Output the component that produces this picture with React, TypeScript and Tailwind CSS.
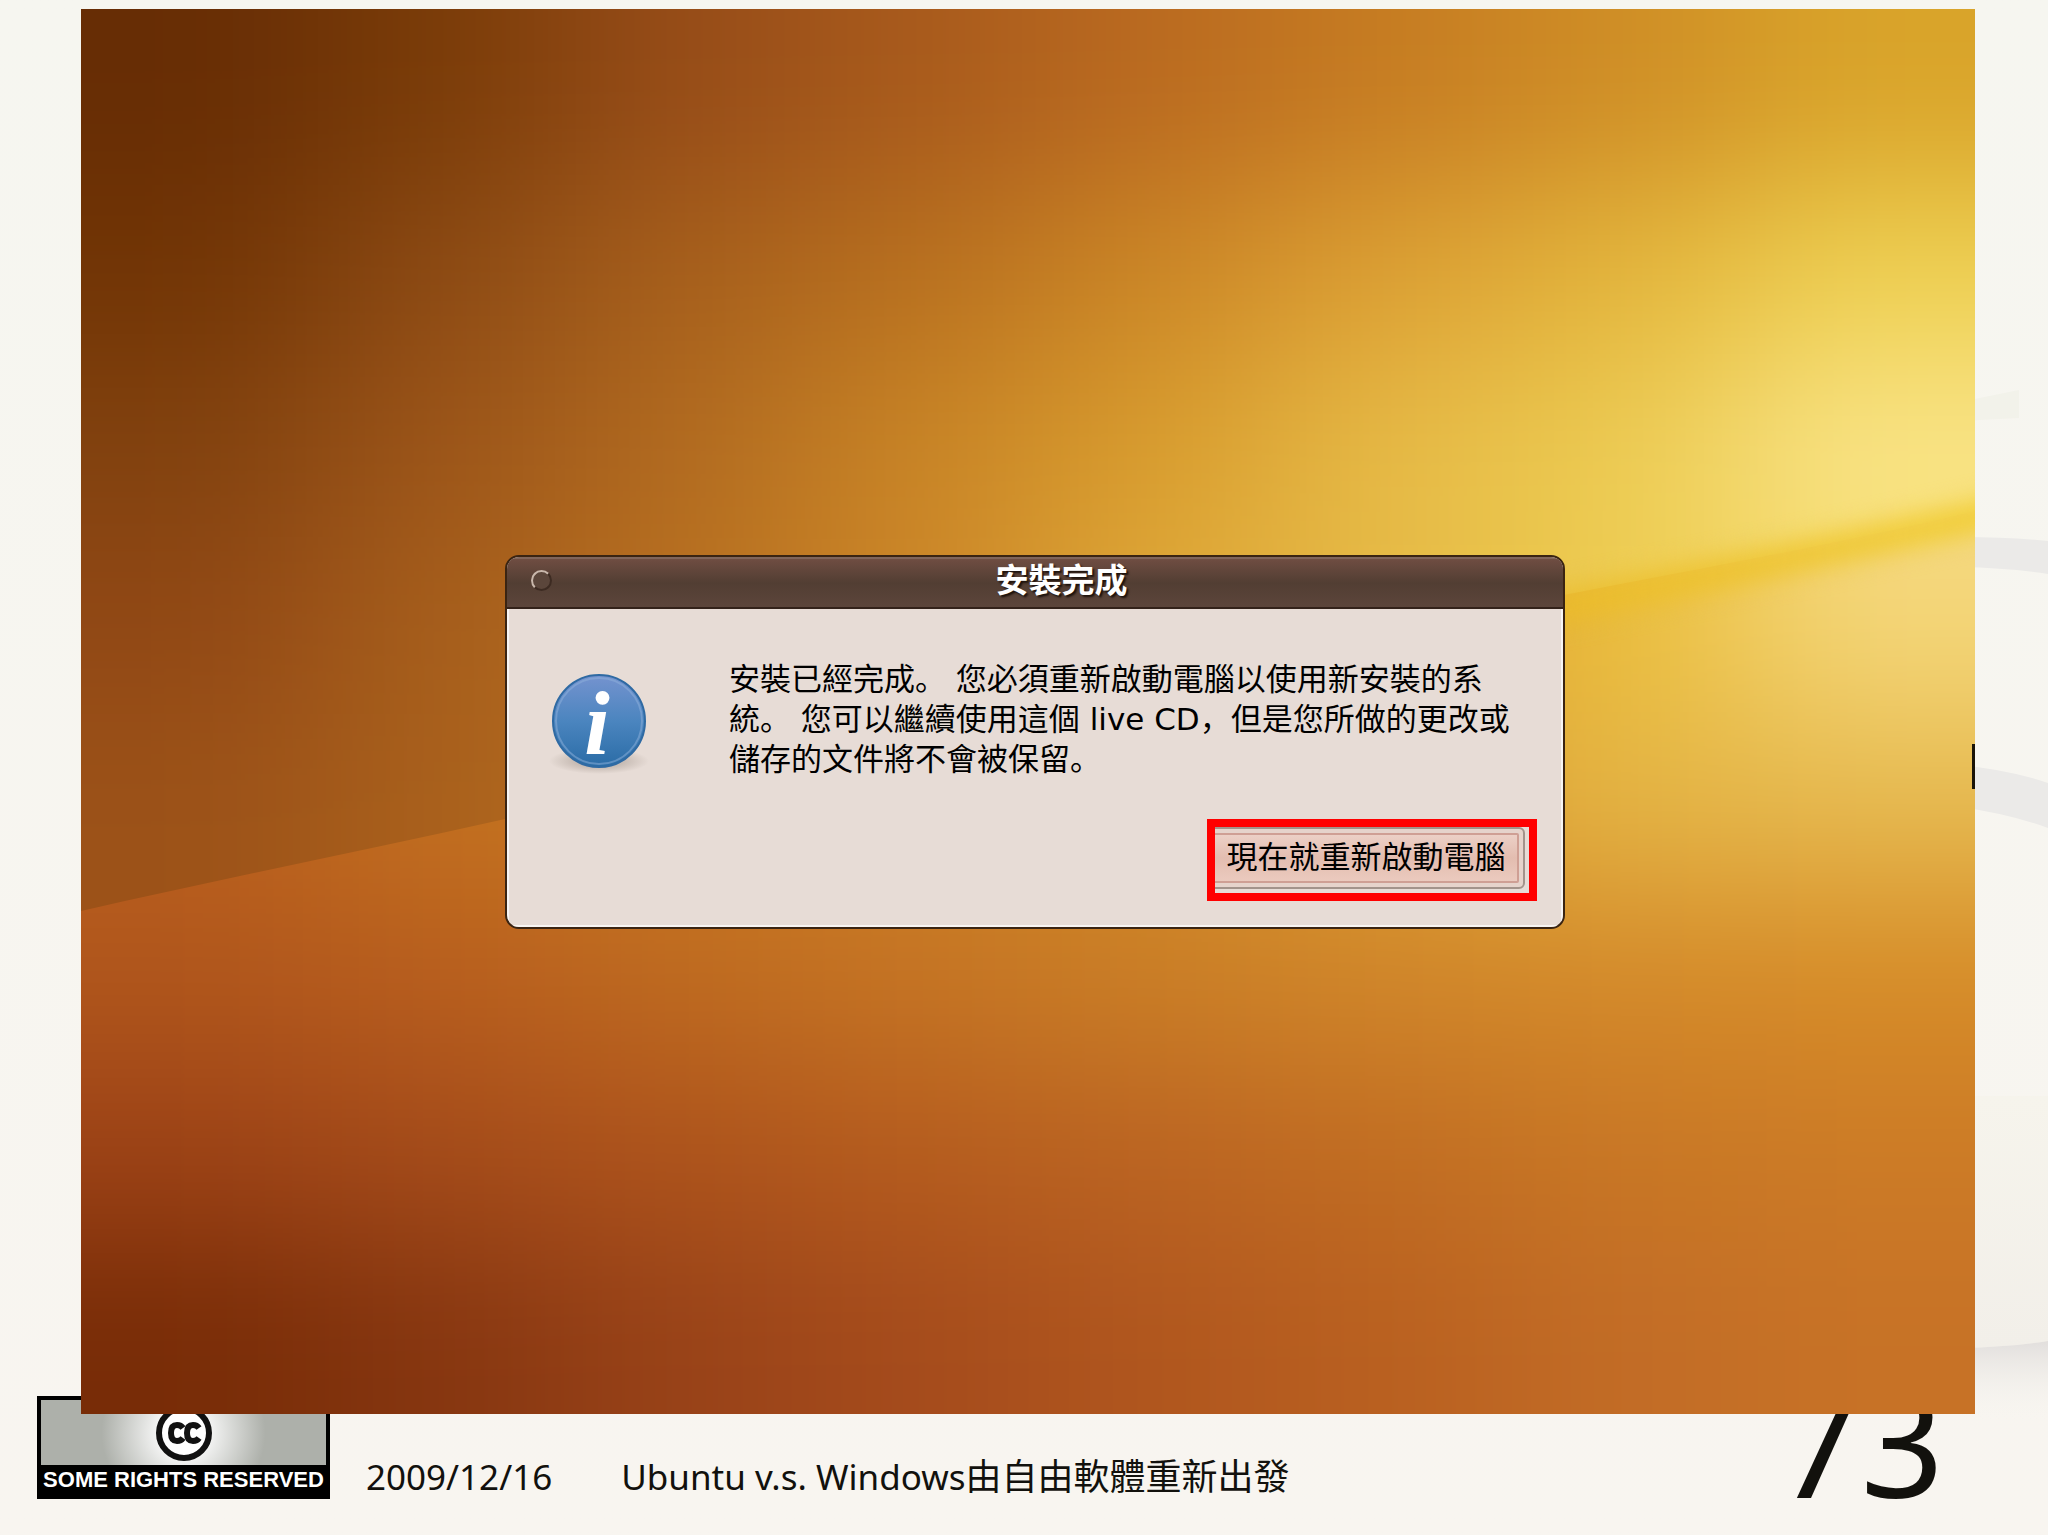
import { useState } from "react";

// colour samples of the wallpaper, 8 columns x 8 rows
const SKY = [
  ["#672d05", "#7a3c08", "#964c18", "#a85a1c", "#ba6a20", "#c67c22", "#cf8e26", "#d9a42a"],
  ["#723505", "#8c4a14", "#a65f1c", "#b8701f", "#cb8626", "#dca034", "#e3b53c", "#eed052"],
  ["#82420f", "#9c5519", "#b16a20", "#c88426", "#d89c2e", "#e6ba46", "#eccb52", "#f9e488"],
  ["#914815", "#a65e1c", "#b87020", "#cc8628", "#dfa838", "#e6ba46", "#eecd50", "#f6dd70"],
  ["#9c5218", "#a9601c", "#b87020", "#cc8628", "#dfa838", "#e6ba46", "#eecb4a", "#f4d660"],
  ["#9c5218", "#a9601c", "#b87020", "#cc8628", "#dfa838", "#e6ba46", "#eecb4a", "#f4d660"],
];

const GROUND = [
  ["#ba601e", "#c06c20", "#c87a20", "#cc8024", "#d18a28", "#e0a030", "#eabe38", "#f5da84"],
  ["#ba601e", "#c06c20", "#c87a20", "#cc8024", "#d18a28", "#e0a030", "#eabe38", "#f5da84"],
  ["#ba601e", "#c06c20", "#c87a20", "#cc8024", "#d18a28", "#e0a030", "#eabe38", "#f5da84"],
  ["#ba601e", "#c06c20", "#c87a20", "#cc8024", "#d18a28", "#e0a030", "#eabe3c", "#f4d678"],
  ["#ba601e", "#c2701f", "#c8781f", "#cc8024", "#d18a28", "#dc9e32", "#e4b444", "#e6ba50"],
  ["#b0561c", "#b85e1e", "#be6a20", "#c57424", "#ca7e26", "#d0862a", "#d48a2a", "#d68c28"],
  ["#9c4216", "#a44b1a", "#ad531c", "#b55c1e", "#bb6422", "#c16d22", "#c87725", "#cc7b26"],
  ["#782c07", "#863610", "#984218", "#a54b1c", "#b0561e", "#b96020", "#c26c26", "#c77226"],
];

const COLS = [-1, 0, 1, 2, 3, 4, 5, 6, 7, 8];
const CELL_W = 237;
const CELL_H = 176;

function ColourField({ rows }: { rows: string[][] }) {
  return (
    <g filter="url(#soften)">
      {[-1, ...rows.map((_, i) => i), rows.length].map((row) =>
        COLS.map((col) => (
          <rect
            key={`${row}-${col}`}
            x={col * CELL_W}
            y={row * CELL_H}
            width={CELL_W + 1}
            height={CELL_H + 1}
            fill={
              rows[Math.min(Math.max(row, 0), rows.length - 1)][
                Math.min(Math.max(col, 0), 7)
              ]
            }
          />
        ))
      )}
    </g>
  );
}

function Wallpaper() {
  return (
    <svg
      className="absolute inset-0 h-full w-full"
      viewBox="0 0 1894 1405"
      preserveAspectRatio="none"
      aria-hidden="true"
    >
      <defs>
        <filter
          id="soften"
          filterUnits="userSpaceOnUse"
          x="-240"
          y="-180"
          width="2380"
          height="1770"
          colorInterpolationFilters="sRGB"
        >
          <feGaussianBlur stdDeviation="90 70" />
        </filter>
        <filter
          id="glow"
          filterUnits="userSpaceOnUse"
          x="1000"
          y="300"
          width="1000"
          height="500"
          colorInterpolationFilters="sRGB"
        >
          <feGaussianBlur stdDeviation="12" />
        </filter>
        <linearGradient id="ridge" x1="0" x2="1" y1="0" y2="0">
          <stop offset="0" stopColor="#e6ac28" stopOpacity="0" />
          <stop offset="0.4" stopColor="#ebbc2a" stopOpacity="0.9" />
          <stop offset="1" stopColor="#f2d038" />
        </linearGradient>
        <clipPath id="ground">
          <path d="M0 902 C140 870 280 842 424 810 C800 724 1120 660 1483 586 C1640 556 1780 530 1894 502 V1405 H0 Z" />
        </clipPath>
      </defs>
      <ColourField rows={SKY} />
      <g clipPath="url(#ground)">
        <ColourField rows={GROUND} />
      </g>
      <path
        d="M1200 656 L1483 598 C1640 564 1780 536 1940 498"
        fill="none"
        stroke="url(#ridge)"
        strokeWidth="30"
        filter="url(#glow)"
      />
    </svg>
  );
}

function SlideBackdrop() {
  return (
    <svg
      className="absolute inset-0 h-full w-full"
      viewBox="0 0 2048 1535"
      preserveAspectRatio="none"
      aria-hidden="true"
    >
      <defs>
        <linearGradient id="fold" x1="0" x2="0" y1="0" y2="1">
          <stop offset="0" stopColor="#e2dfdd" />
          <stop offset="1" stopColor="#f6f4ef" stopOpacity="0" />
        </linearGradient>
        <linearGradient id="sheet" x1="0" x2="0" y1="0" y2="1">
          <stop offset="0" stopColor="#f6f4ec" />
          <stop offset="1" stopColor="#f2efe9" />
        </linearGradient>
      </defs>
      <path d="M1960 402 L2019 390 V418 L1960 421 Z" fill="#f2f2ea" />
      <path d="M1960 537 Q2010 537 2048 541 V574 Q2010 568 1960 567 Z" fill="#ebeae8" />
      <path d="M1960 765 Q2010 770 2048 783 V828 Q2010 814 1960 807 Z" fill="#ebeae8" />
      <path d="M1960 1096 H2048 V1341 Q2010 1347 1960 1348 Z" fill="url(#sheet)" />
      <path d="M1960 1348 Q2010 1347 2048 1341 V1420 H1960 Z" fill="url(#fold)" />
    </svg>
  );
}

function InfoIcon() {
  return (
    <svg className="mt-3 h-[108px] w-[108px] shrink-0" viewBox="0 0 108 108" role="img" aria-label="info">
      <defs>
        <linearGradient id="disc" x1="0" x2="0" y1="0" y2="1">
          <stop offset="0" stopColor="#7593cf" />
          <stop offset="0.5" stopColor="#4b85bf" />
          <stop offset="1" stopColor="#2a6ca6" />
        </linearGradient>
        <radialGradient id="disc-shadow">
          <stop offset="0.5" stopColor="#a99d94" stopOpacity="0.5" />
          <stop offset="1" stopColor="#a99d94" stopOpacity="0" />
        </radialGradient>
      </defs>
      <ellipse cx="54" cy="90" rx="50" ry="13" fill="url(#disc-shadow)" />
      <circle cx="54" cy="50" r="46" fill="url(#disc)" stroke="#2f6aa3" strokeWidth="2" />
      <circle cx="54" cy="50" r="43" fill="none" stroke="#8fb2dc" strokeOpacity="0.5" strokeWidth="2" />
      <text
        x="52"
        y="83"
        textAnchor="middle"
        className="fill-white font-['Liberation_Serif',serif] text-[92px] font-bold italic"
      >
        i
      </text>
    </svg>
  );
}

function LicenseBadge() {
  return (
    <a
      href="#license"
      className="flex h-[103px] w-[293px] shrink-0 flex-col border-4 border-black bg-black"
    >
      <span className="flex flex-1 items-center justify-center bg-[radial-gradient(circle_at_center,#ffffff_12%,#adb0aa_56%)]">
        <svg className="h-[60px] w-[60px]" viewBox="0 0 60 60" aria-hidden="true">
          <circle cx="30" cy="30" r="25" fill="#fff" stroke="#111" strokeWidth="6" />
          <g fill="none" stroke="#111" strokeWidth="6">
            <path d="M29 25 Q27 22 23 22 Q17 22 17 30 Q17 38 23 38 Q27 38 29 35" />
            <path d="M45 25 Q43 22 39 22 Q33 22 33 30 Q33 38 39 38 Q43 38 45 35" />
          </g>
        </svg>
      </span>
      <span className="h-[30px] text-center font-['Liberation_Sans',sans-serif] text-[22px] leading-[30px] font-bold whitespace-nowrap text-white">
        SOME RIGHTS RESERVED
      </span>
    </a>
  );
}

function InstallDialog({ onRestart }: { onRestart: () => void }) {
  return (
    <div
      role="dialog"
      aria-labelledby="dialog-title"
      className="w-[1060px] max-w-full overflow-hidden rounded-[14px] border-2 border-[#3a2412] bg-[#e7dcd6] font-['DejaVu_Sans','Noto_Sans_CJK_SC',sans-serif] text-black"
    >
      {/* Title bar */}
      <div className="flex h-[52px] items-center border-t-2 border-b-2 border-t-[#80655a] border-b-[#33221a] bg-linear-to-b from-[#6f4d42] via-[#523e33] to-[#5c453b] pb-1 pl-6">
        <button
          type="button"
          aria-label="關閉"
          className="h-[21px] w-[21px] rounded-full border-2 border-[#3d2b22] border-t-[#c9b8ac] border-l-[#c9b8ac] bg-[#5b463b]"
        />
        <h1
          id="dialog-title"
          className="flex-1 pl-2 text-center text-[33px] leading-[44px] font-bold text-white [text-shadow:2px_2px_2px_#1d120c]"
        >
          安裝完成
        </h1>
      </div>

      {/* Message */}
      <div className="border-x-2 border-b-2 border-white/70 pt-[50px] pr-9 pb-9 pl-9">
        <div className="flex items-start gap-[76px]">
          <InfoIcon />
          <p className="text-[31px] leading-[40px] whitespace-nowrap">
            安裝已經完成。 您必須重新啟動電腦以使用新安裝的系
            <br />
            統。 您可以繼續使用這個 live CD，但是您所做的更改或
            <br />
            儲存的文件將不會被保留。
          </p>
        </div>
        <div className="mt-12 flex justify-end">
          <div className="relative">
            <button
              type="button"
              onClick={onRestart}
              className="block rounded-md border-2 border-[#a3938b] bg-[#e6d3cb] p-1"
            >
              <span className="flex h-[50px] w-[306px] items-center justify-center rounded-xs border-2 border-[#cf9f94] bg-linear-to-b from-[#ecd0c6] via-[#e3bdb0] to-[#ebcabe] text-[31px] whitespace-nowrap">
                現在就重新啟動電腦
              </span>
            </button>
            {/* Highlight frame over the button */}
            <div className="pointer-events-none absolute -top-2 -right-3 -bottom-3 left-0 border-8 border-[#ff0000]" />
          </div>
        </div>
      </div>
    </div>
  );
}

export default function App() {
  const [restarting, setRestarting] = useState(false);

  return (
    <div className="relative flex min-h-screen flex-col bg-[#f7f5f0] bg-linear-to-b from-[#f6f6f0] to-[#f8f5f0] font-['Noto_Sans','Noto_Sans_CJK_TC',sans-serif]">
      <SlideBackdrop />

      <main
        aria-busy={restarting}
        className="relative z-10 mt-[9px] mr-[73px] ml-[81px] flex flex-1 items-center justify-center overflow-hidden pt-[60px] pl-[14px]"
      >
        <Wallpaper />
        <div className="relative">
          <InstallDialog onRestart={() => setRestarting(true)} />
        </div>
        <div className="absolute top-[735px] right-0 h-[45px] w-[3px] bg-[#1a1408]" />
      </main>

      <footer className="relative -mt-[30px] flex items-end pr-[104px] pb-9 pl-[37px] text-[#12110d]">
        <LicenseBadge />
        <time dateTime="2009-12-16" className="ml-9 text-[35px] leading-[44px]">
          2009/12/16
        </time>
        <span className="ml-[69px] text-[35px] leading-[44px] whitespace-nowrap">
          Ubuntu v.s. Windows
          <span className="text-[36px]">由自由軟體重新出發</span>
        </span>
        <span className="ml-auto text-[146px] leading-[115px]">73</span>
      </footer>
    </div>
  );
}
